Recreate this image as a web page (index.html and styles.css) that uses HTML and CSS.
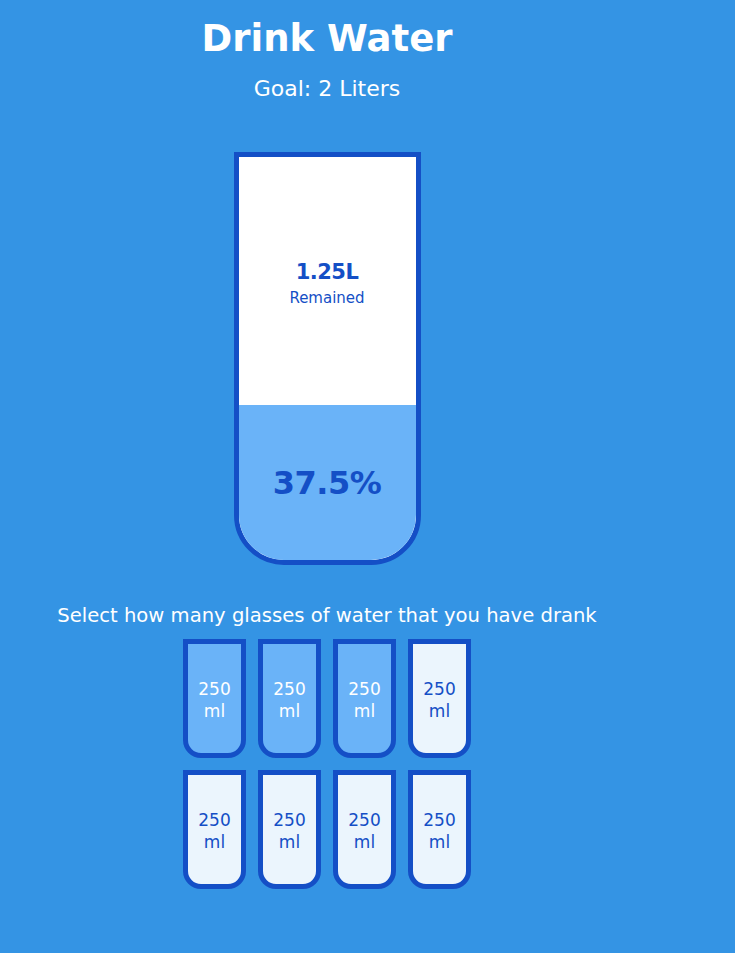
FILE: index.html
```html
<!DOCTYPE html>
<html lang="en">
<head>
  <meta charset="UTF-8">
  <title>Drink Water</title>
  <link rel="stylesheet" href="styles.css">
</head>
<body>
  <main class="app">
    <h1 class="title">Drink Water</h1>
    <h3 class="goal">Goal: 2 Liters</h3>

    <div class="cup">
      <div class="remained">
        <span class="liters">1.25L</span>
        <small class="remained-label">Remained</small>
      </div>
      <div class="percentage">37.5%</div>
    </div>

    <p class="text">Select how many glasses of water that you have drank</p>

    <div class="cups">
      <div class="cup-small full">250<br>ml</div>
      <div class="cup-small full">250<br>ml</div>
      <div class="cup-small full">250<br>ml</div>
      <div class="cup-small">250<br>ml</div>
      <div class="cup-small">250<br>ml</div>
      <div class="cup-small">250<br>ml</div>
      <div class="cup-small">250<br>ml</div>
      <div class="cup-small">250<br>ml</div>
    </div>
  </main>
</body>
</html>
```

FILE: styles.css
```css
* {
  box-sizing: border-box;
}

body {
  margin: 0;
  background-color: #3494e4;
  color: #fff;
  font-family: "DejaVu Sans", "Open Sans", sans-serif;
}

.app {
  width: 654px;
  display: flex;
  flex-direction: column;
  align-items: center;
}

.title {
  margin: 16px 0 0;
  font-size: 37px;
  line-height: 46px;
  font-weight: 700;
}

.goal {
  margin: 14px 0 0;
  font-size: 22px;
  line-height: 26px;
  font-weight: 400;
}

.cup {
  margin-top: 50px;
  width: 187px;
  height: 413px;
  background-color: #fff;
  border: 5px solid #144fc6;
  border-radius: 0 0 50px 50px;
  color: #144fc6;
  display: flex;
  flex-direction: column;
  overflow: hidden;
}

.remained {
  flex: 1;
  padding-top: 4px;
  display: flex;
  flex-direction: column;
  align-items: center;
  justify-content: center;
  text-align: center;
}

.liters {
  font-size: 21px;
  font-weight: 700;
  line-height: 26px;
  letter-spacing: -0.5px;
}

.remained-label {
  margin-top: 4px;
  font-size: 15px;
  line-height: 18px;
}

.percentage {
  height: 155px;
  background-color: #6ab3f8;
  display: flex;
  align-items: center;
  justify-content: center;
  font-size: 32px;
  font-weight: 700;
  letter-spacing: -0.5px;
}

.text {
  margin: 39px 0 0;
  font-size: 19.6px;
  line-height: 24px;
  text-align: center;
}

.cups {
  margin-top: 11px;
  width: 288px;
  display: grid;
  grid-template-columns: repeat(4, 63px);
  column-gap: 12px;
  row-gap: 12px;
}

.cup-small {
  height: 119px;
  padding-top: 2px;
  border: 5px solid #144fc6;
  border-radius: 0 0 18px 18px;
  background-color: rgba(255, 255, 255, 0.9);
  color: #144fc6;
  display: flex;
  align-items: center;
  justify-content: center;
  text-align: center;
  font-size: 17px;
  line-height: 22px;
}

.cup-small.full {
  background-color: #6ab3f8;
  color: #fff;
}
```
